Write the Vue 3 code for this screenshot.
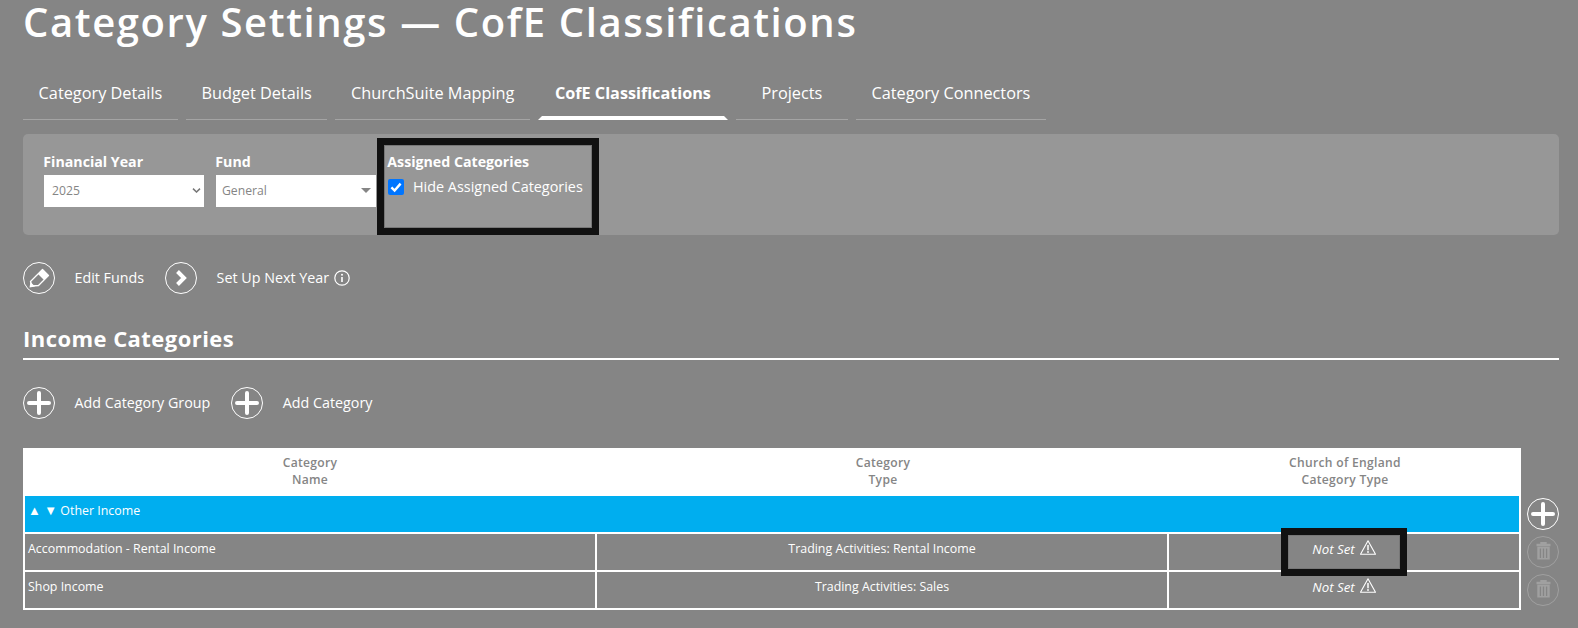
<script setup>
const tabs = [
  { label: 'Category Details' },
  { label: 'Budget Details' },
  { label: 'ChurchSuite Mapping' },
  { label: 'CofE Classifications', active: true },
  { label: 'Projects' },
  { label: 'Category Connectors' }
]
const rows = [
  { name: 'Accommodation - Rental Income', type: 'Trading Activities: Rental Income', marked: true },
  { name: 'Shop Income', type: 'Trading Activities: Sales', marked: false }
]
</script>

<template>
  <div class="page">
    <h1 class="title">Category Settings — CofE Classifications</h1>

    <nav class="tabs">
      <a
        v-for="tab in tabs"
        :key="tab.label"
        class="tab"
        :class="{ active: tab.active }"
      >{{ tab.label }}</a>
    </nav>

    <section class="filters">
      <div class="field year">
        <label>Financial Year</label>
        <div class="select">
          <span>2025</span>
          <svg viewBox="0 0 10 6" width="9" height="5"><path d="M.8 .8 5 4.800 9.200 .8" fill="none" stroke="#777" stroke-width="1.800" /></svg>
        </div>
      </div>
      <div class="field fund">
        <label>Fund</label>
        <div class="select">
          <span>General</span>
          <svg viewBox="0 0 10 5" width="10" height="5"><path d="M0 0h10L5 5z" fill="#858585" /></svg>
        </div>
      </div>
      <div class="field assigned">
        <label>Assigned Categories</label>
        <div class="check-row">
          <span class="checkbox">
            <svg viewBox="0 0 16 16" width="16" height="16"><path d="M3.400 8.400 6.600 11.600 12.600 4.600" fill="none" stroke="#fff" stroke-width="2.400" /></svg>
          </span>
          <span>Hide Assigned Categories</span>
        </div>
      </div>
    </section>

    <div class="actions first">
      <a class="action">
        <span class="circle">
          <svg viewBox="0 0 32 32" width="32" height="32">
            <path d="M19.500 7.500 25.500 13.500 15.500 23.500 9 24 7.500 19.500z" fill="none" stroke="#fff" stroke-width="1.300" stroke-linejoin="round" />
            <path d="M19.500 7.500 25.500 13.500 21 18 15 12z" fill="#fff" />
            <path d="M7.500 20 6.500 25.500 12 24.500z" fill="#fff" />
          </svg>
        </span>
        <span class="action-label">Edit Funds</span>
      </a>
      <a class="action">
        <span class="circle">
          <svg viewBox="0 0 32 32" width="32" height="32"><path d="M12.500 9.500 19 16 12.500 22.500" fill="none" stroke="#fff" stroke-width="4" /></svg>
        </span>
        <span class="action-label">Set Up Next Year</span>
        <svg class="info" viewBox="0 0 16 16" width="16" height="16">
          <circle cx="8" cy="8" r="7.200" fill="none" stroke="#fff" stroke-width="1.200" />
          <circle cx="8" cy="4.700" r="1" fill="#fff" />
          <path d="M8 7v5" stroke="#fff" stroke-width="1.600" />
        </svg>
      </a>
    </div>

    <h2 class="section-title">Income Categories</h2>

    <div class="actions second">
      <a class="action">
        <span class="circle">
          <svg viewBox="0 0 32 32" width="32" height="32"><path d="M16 6v20M6 16h20" stroke="#fff" stroke-width="4" stroke-linecap="round" /></svg>
        </span>
        <span class="action-label">Add Category Group</span>
      </a>
      <a class="action">
        <span class="circle">
          <svg viewBox="0 0 32 32" width="32" height="32"><path d="M16 6v20M6 16h20" stroke="#fff" stroke-width="4" stroke-linecap="round" /></svg>
        </span>
        <span class="action-label">Add Category</span>
      </a>
    </div>

    <div class="table-wrap">
      <table class="grid">
        <colgroup>
          <col class="c1" /><col class="c2" /><col class="c3" />
        </colgroup>
        <thead>
          <tr>
            <th>Category<br />Name</th>
            <th>Category<br />Type</th>
            <th>Church of England<br />Category Type</th>
          </tr>
        </thead>
        <tbody>
          <tr class="group">
            <td colspan="3"><span class="arrows">▲ ▼</span> Other Income</td>
          </tr>
          <tr v-for="row in rows" :key="row.name" class="row">
            <td>{{ row.name }}</td>
            <td class="center">{{ row.type }}</td>
            <td class="center status">
              <em>Not Set</em>
              <svg viewBox="0 0 16 15" width="16" height="15" class="warn">
                <path d="M8 .8 15.500 14.300H.5z" fill="none" stroke="#fff" stroke-width="1.100" stroke-linejoin="round" />
                <path d="M8 5v5.200" stroke="#fff" stroke-width="1.500" />
                <circle cx="8" cy="12" r=".9" fill="#fff" />
              </svg>
              <span v-if="row.marked" class="highlight"></span>
            </td>
          </tr>
        </tbody>
      </table>

      <div class="side">
        <span class="circle">
          <svg viewBox="0 0 32 32" width="32" height="32"><path d="M16 6v20M6 16h20" stroke="#fff" stroke-width="4" stroke-linecap="round" /></svg>
        </span>
        <span v-for="row in rows" :key="row.name" class="circle muted">
          <svg viewBox="0 0 32 32" width="32" height="32">
            <path d="M13.300 7.800V6h6.400v1.800zM9.500 7.800h14v2.400h-14zM10.300 10.800h12.400v12.700H10.300z" fill="#a0a0a0" />
            <path d="M13.400 12.500v9.500M16.500 12.500v9.500M19.600 12.500v9.500" stroke="#858585" stroke-width="1.300" />
          </svg>
        </span>
      </div>
    </div>
  </div>
</template>

<style>
html, body { margin: 0; background: #858585; }
</style>

<style scoped>
.page {
  width: 1578px;
  height: 628px;
  overflow: hidden;
  box-sizing: border-box;
  padding: 0 19px 0 23px;
  background: #858585;
  color: #fff;
  font-family: "Open Sans", sans-serif;
  font-size: 14.300px;
}
.title {
  margin: 0;
  height: 44px;
  font-size: 40px;
  line-height: 44px;
  font-weight: 600;
  letter-spacing: 1.600px;
  white-space: nowrap;
}
.tabs {
  display: flex;
  gap: 8px;
  margin-top: 25px;
  height: 51px;
}
.tab {
  box-sizing: border-box;
  min-width: 112px;
  height: 51px;
  padding: 13px 15.600px 0;
  font-size: 16.300px;
  line-height: 22px;
  text-align: center;
  border-bottom: 1px solid #a4a4a4;
  white-space: nowrap;
}
.tab.active {
  font-weight: 700;
  font-size: 16.200px;
  padding: 13px 17px 0;
  position: relative;
  border-bottom: 0;
}
.tab.active::after {
  content: "";
  position: absolute;
  left: 0;
  right: 0;
  bottom: 0;
  height: 0;
  border-bottom: 4px solid #fff;
  border-left: 4px solid transparent;
  border-right: 4px solid transparent;
}
.filters {
  display: flex;
  align-items: flex-start;
  height: 101px;
  margin-top: 14px;
  background: #979797;
  border-radius: 5px;
  box-sizing: border-box;
  padding: 18px 0 0 21px;
}
.field label {
  display: block;
  height: 23px;
  margin-left: -.7px;
  font-size: 14.200px;
  line-height: 20px;
  font-weight: 700;
}
.year { width: 160px; margin-right: 12px; }
.fund { width: 160px; }
.select {
  display: flex;
  align-items: center;
  justify-content: space-between;
  box-sizing: border-box;
  height: 32px;
  padding: 0 3px 2px 8px;
  background: #fff;
  color: #858585;
  font-size: 12.200px;
}
.fund .select { padding: 0 5px 2px 6px; }
.assigned {
  width: 208px;
  height: 83px;
  margin: -7px 0 0 8px;
  padding: 6px 0 0 3px;
  box-sizing: border-box;
  outline: 7px solid #111;
  border: 1px solid #777;
}
.assigned label { height: 25px; }
.check-row {
  display: flex;
  align-items: center;
  gap: 9px;
  font-size: 14.400px;
  line-height: 20px;
  white-space: nowrap;
}
.checkbox {
  width: 16px;
  height: 16px;
  border-radius: 2px;
  background: #0075ff;
  display: block;
  flex: none;
}
.checkbox svg { display: block; }
.actions {
  display: flex;
  align-items: center;
}
.actions.first { margin-top: 27px; gap: 21px; }
.actions.second { margin-top: 27px; gap: 21px; }
.action {
  display: flex;
  align-items: center;
  font-size: 14.300px;
}
.action-label { margin-left: 19.500px; padding-bottom: 2px; }
.info { margin-left: 5px; margin-bottom: 1px; }
.circle {
  box-sizing: border-box;
  width: 32px;
  height: 32px;
  border: 1.500px solid #fff;
  border-radius: 50%;
  display: flex;
  align-items: center;
  justify-content: center;
  flex: none;
}
.circle svg { flex: none; }
.section-title {
  margin: 30px 0 0;
  height: 34px;
  font-size: 22px;
  line-height: 28px;
  font-weight: 700;
  letter-spacing: .45px;
  border-bottom: 2px solid #fff;
}
.table-wrap {
  display: flex;
  align-items: flex-start;
  margin-top: 29px;
}
.grid {
  width: 1498px;
  table-layout: fixed;
  border-collapse: separate;
  border-spacing: 0;
  font-size: 12.400px;
}
.c1 { width: 574px; }
.c2 { width: 572px; }
.grid th {
  box-sizing: border-box;
  height: 48px;
  padding: 0 0 2px;
  background: #fff;
  color: #858585;
  font-size: 12.100px;
  line-height: 17px;
  font-weight: 600;
  letter-spacing: .3px;
  text-align: center;
}
.group td {
  box-sizing: border-box;
  height: 38px;
  background: #00aeef;
  padding: 5px 3px 0;
  vertical-align: top;
  line-height: 18px;
  border: solid #fff;
  border-width: 0 2px 2px;
}
.arrows { font-size: 13px; }
.row td {
  box-sizing: border-box;
  height: 38px;
  padding: 6px 3px 0;
  vertical-align: top;
  line-height: 18px;
  border-right: 2px solid #fff;
  border-bottom: 2px solid #fff;
}
.row td:first-child { border-left: 2px solid #fff; }
.center { text-align: center; }
.status { position: relative; }
.status em { font-style: italic; font-size: 13.300px; margin-right: 5px; }
.warn { vertical-align: -1px; }
.highlight {
  position: absolute;
  left: 112px;
  top: -6px;
  box-sizing: border-box;
  width: 126px;
  height: 48px;
  border: 7px solid #111;
  box-shadow: inset 0 0 0 1px #777;
}
.side {
  display: flex;
  flex-direction: column;
  gap: 6px;
  margin: 50px 0 0 6px;
}
.muted { border-color: #a0a0a0; }
</style>
